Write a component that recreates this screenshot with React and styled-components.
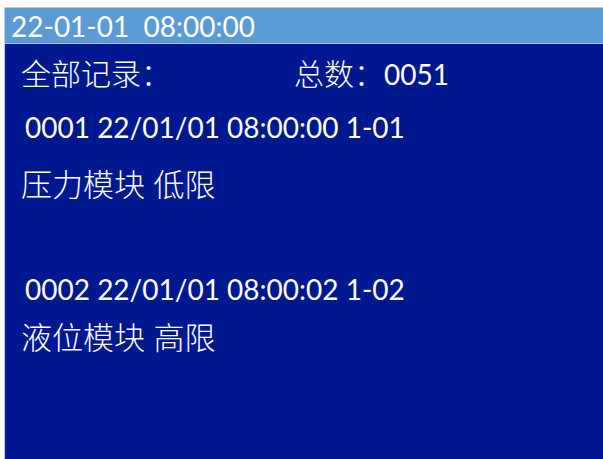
import React from "react";
import styled, { createGlobalStyle } from "styled-components";

const GlobalStyle = createGlobalStyle`
  html, body {
    margin: 0;
    padding: 0;
    background: #ffffff;
  }
  body {
    font-family: Lato, "Noto Sans CJK SC", sans-serif;
  }
`;

const Frame = styled.div`
  width: 603px;
  height: 459px;
  box-sizing: border-box;
  padding: 7px 0 0 4px;
  overflow: hidden;
`;

const Screen = styled.div`
  height: 100%;
  display: flex;
  flex-direction: column;
  border-top: 1px solid #c9c9c9;
  border-left: 1px solid #c9c9c9;
  background: #00188f;
  color: #ffffff;
`;

const TitleBar = styled.div`
  height: 35px;
  display: flex;
  align-items: center;
  padding-left: 6px;
  background: #5b9bd5;
  border-bottom: 1px solid #a9c6e6;
  font-size: 28px;
  white-space: pre;
`;

const Body = styled.div`
  flex: 1;
  display: flex;
  flex-direction: column;
  padding: 0 0 0 16px;
`;

const SummaryRow = styled.div`
  display: flex;
  align-items: center;
  height: 56px;
  font-size: 30px;
  font-weight: 300;
`;

const SummaryLabel = styled.span`
  width: 273px;
`;

const Count = styled.span`
  font-size: 28px;
  font-weight: 400;
`;

const Line = styled.div`
  display: flex;
  align-items: center;
  height: 40px;
  margin-top: ${(p) => p.$gap || 0}px;
  padding-left: ${(p) => (p.$mono ? 4 : 0)}px;
  font-size: ${(p) => (p.$mono ? 28 : 31)}px;
  font-weight: ${(p) => (p.$mono ? 400 : 300)};
  white-space: pre;
`;

const records = [
  { head: "0001 22/01/01 08:00:00 1-01", text: "压力模块 低限", gapHead: 7, gapText: 15 },
  { head: "0002 22/01/01 08:00:02 1-02", text: "液位模块 高限", gapHead: 67, gapText: 6 },
];

export default function App() {
  return (
    <>
      <GlobalStyle />
      <Frame>
        <Screen>
          <TitleBar>22-01-01  08:00:00</TitleBar>
          <Body>
            <SummaryRow>
              <SummaryLabel>全部记录：</SummaryLabel>
              <span>
                总数：<Count>0051</Count>
              </span>
            </SummaryRow>
            {records.map((r) => (
              <React.Fragment key={r.head}>
                <Line $mono $gap={r.gapHead}>{r.head}</Line>
                <Line $gap={r.gapText}>{r.text}</Line>
              </React.Fragment>
            ))}
          </Body>
        </Screen>
      </Frame>
    </>
  );
}
